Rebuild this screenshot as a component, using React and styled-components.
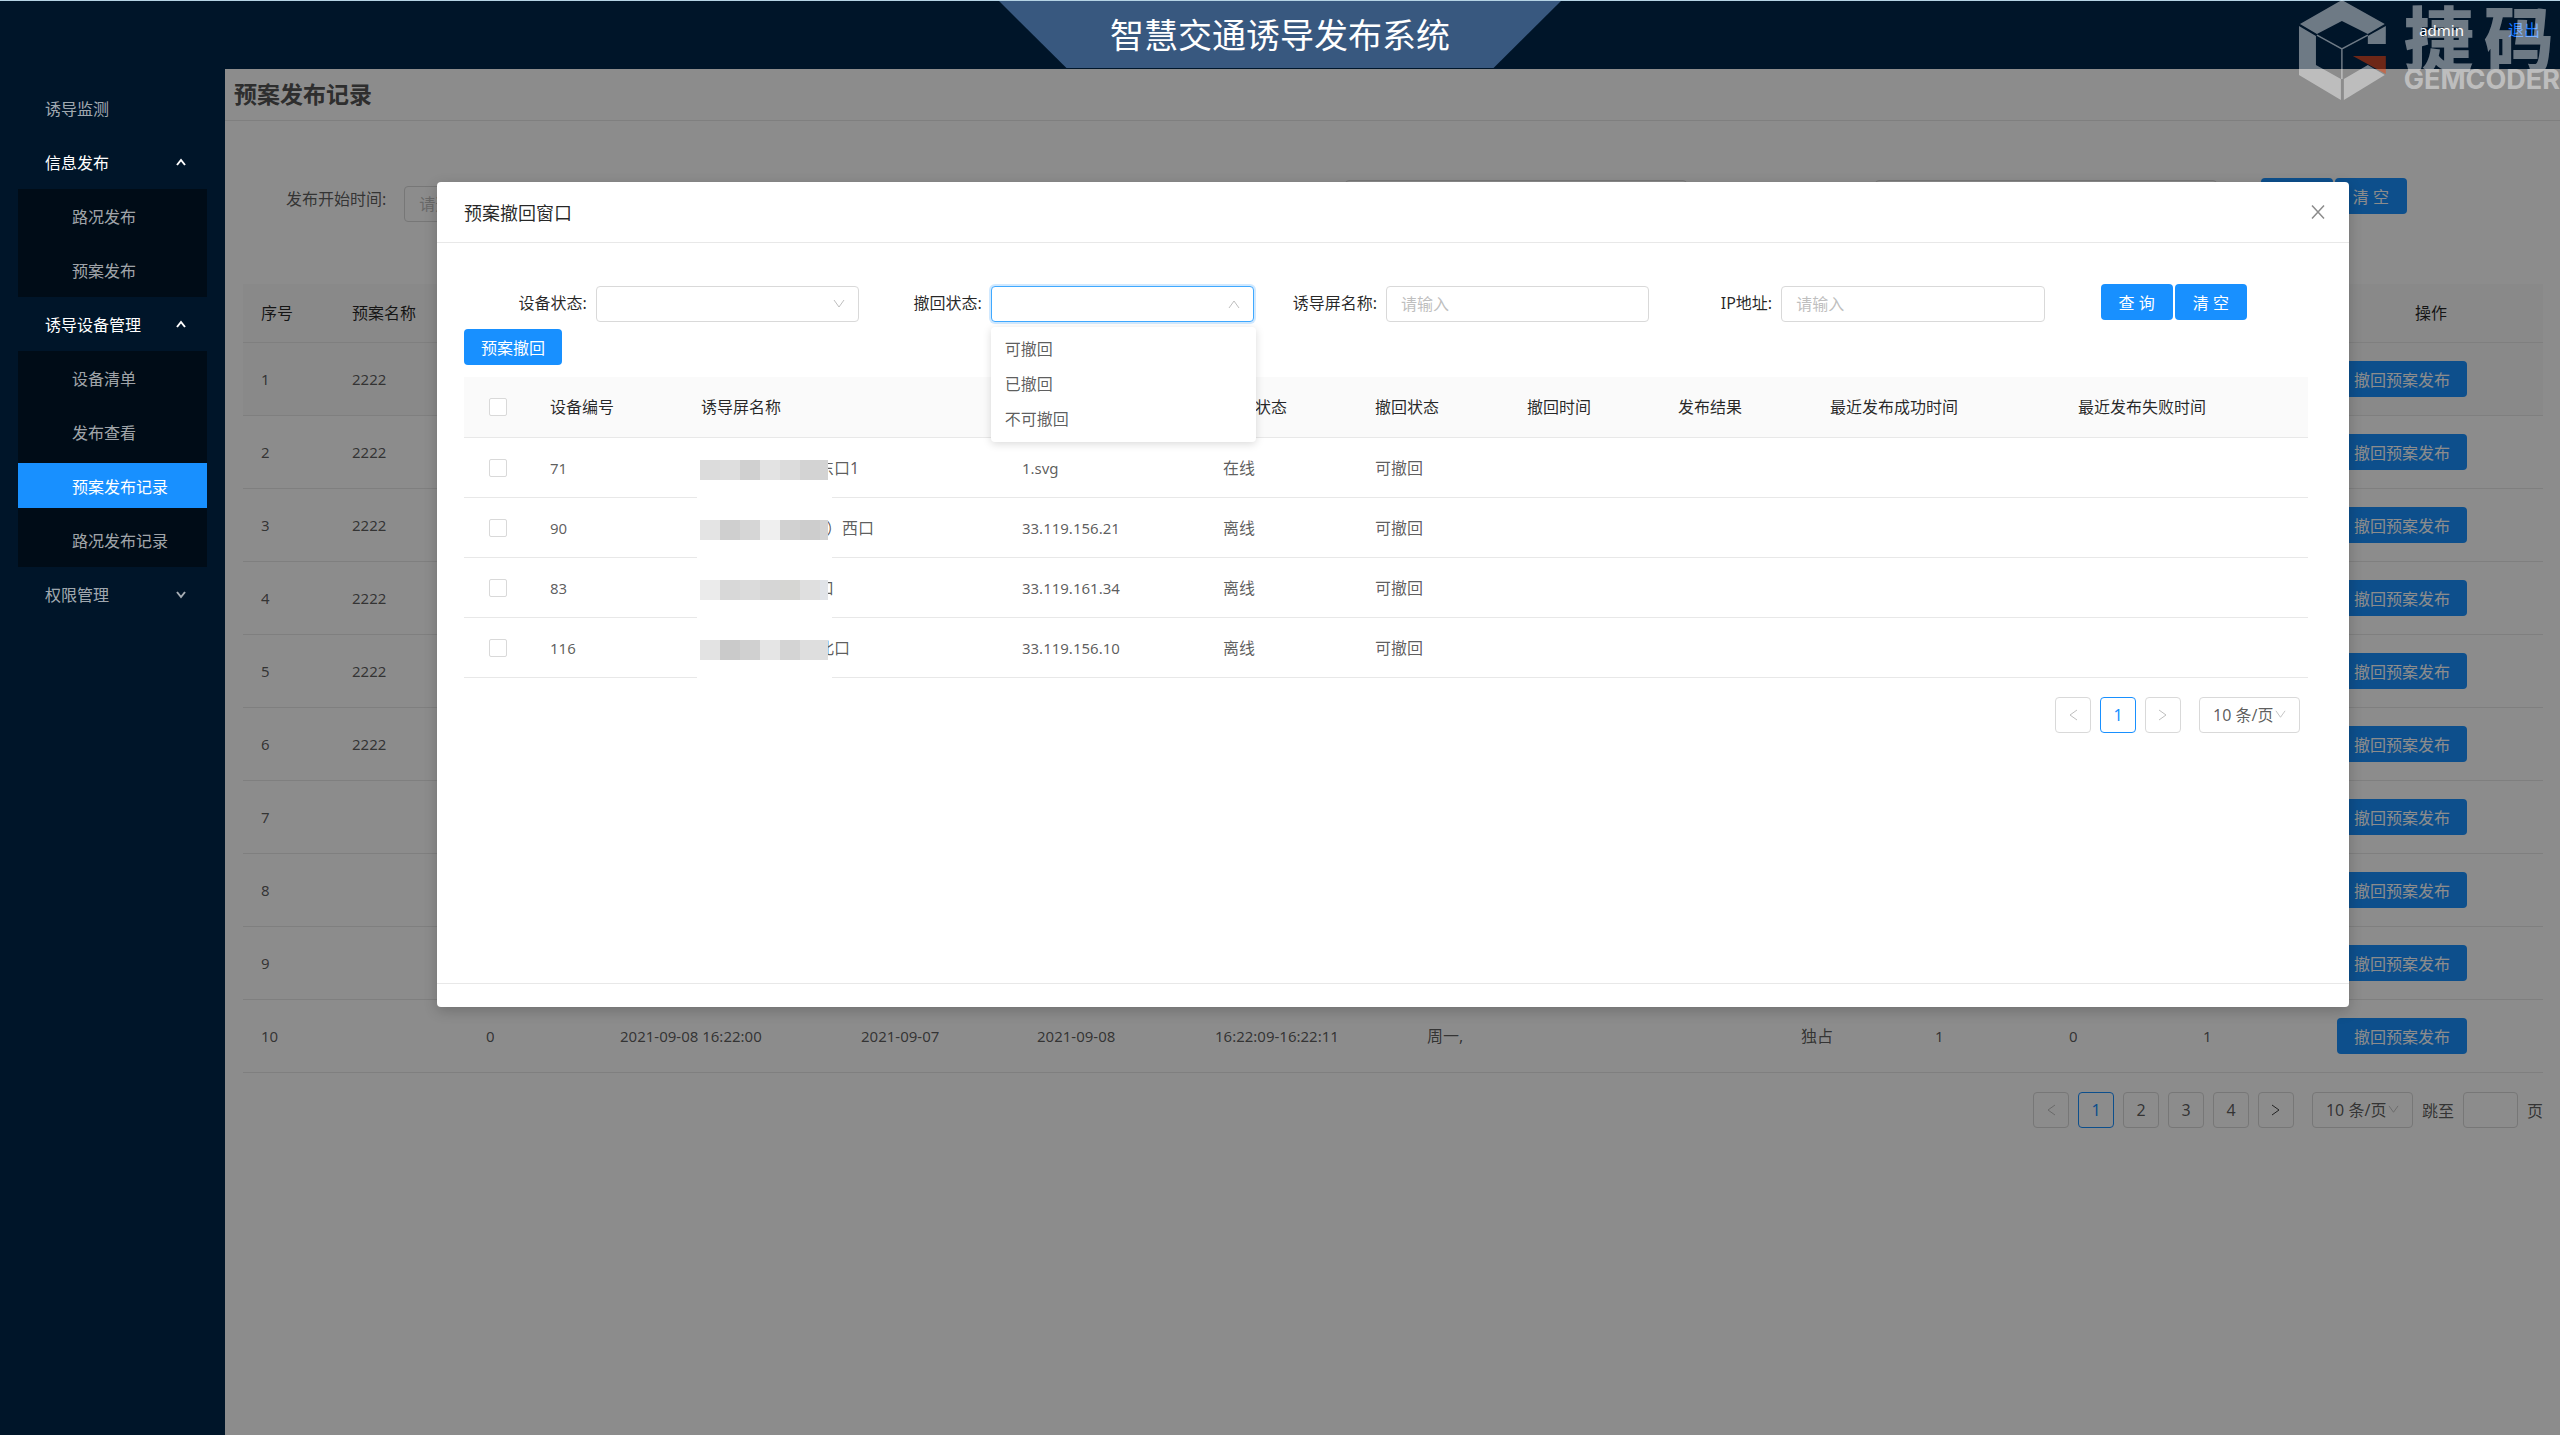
import styled, { createGlobalStyle, css } from "styled-components";

const GlobalStyle = createGlobalStyle`
	* {
		box-sizing: border-box;
	}
	body {
		margin: 0;
		background-color: #001529;
	}
	body, button, input, select {
		font-family: "Noto Sans", "Noto Sans CJK SC", sans-serif;
		font-size: 16px;
		color: rgba(0, 0, 0, 0.65);
	}
`;

const Page = styled.div`
	display: grid;
	grid-template: 69px 1fr / 225px 1fr;
	min-height: 100vh;
`;

/* header */

const Header = styled.header`
	grid-column: 1 / 3;
	position: relative;
	display: flex;
	justify-content: center;
	background-color: #001529;
	border-top: 1px solid #b5d3e4;
`;

const Banner = styled.h1`
	width: 562px;
	height: 67px;
	margin: 0;
	background-color: #38587f;
	clip-path: polygon(0 0, 100% 0, 88% 100%, 12% 100%);
	color: white;
	font-size: 34px;
	font-weight: 400;
	line-height: 68px;
	text-align: center;
`;

const Account = styled.div`
	position: absolute;
	top: 0;
	right: 20px;
	display: flex;
	gap: 44px;
	line-height: 58px;
	color: white;
	font-size: 15px;
`;

const Logout = styled.a`
	color: #1677ff;
	font-size: 16px;
	text-decoration: none;
`;

const Watermark = styled.div`
	position: absolute;
	top: 0;
	right: 0;
	z-index: 5;
	width: 270px;
	height: 104px;
	display: flex;
	gap: 6px;
	overflow: hidden;
	opacity: 0.43;
	color: white;
	pointer-events: none;
`;

const Brand = styled.div`
	display: flex;
	flex-direction: column;
	padding-top: 5px;
	white-space: nowrap;
`;

const BrandName = styled.div`
	display: flex;
	gap: 10px;
	font-family: "Noto Sans CJK SC", sans-serif;
	font-size: 70px;
	font-weight: 900;
	line-height: 62px;
`;

const BrandLatin = styled.div`
	font-family: Inter, sans-serif;
	font-size: 27px;
	font-weight: 700;
	line-height: 26px;
`;

/* side menu */

const Side = styled.nav`
	padding: 12px 18px;
	background-color: #001529;
`;

const itemText = css`
	display: flex;
	align-items: center;
	justify-content: space-between;
	width: 100%;
	border: none;
	font-size: 16px;
	text-align: left;
	text-decoration: none;
	color: ${(props) => (props.$active ? "white" : "rgba(255, 255, 255, 0.65)")};
`;

const MenuTitle = styled.button`
	${itemText}
	height: 54px;
	padding: 0 20px 0 27px;
	background: none;
`;

const SubMenu = styled.div`
	display: flex;
	flex-direction: column;
	gap: 9px;
	padding: 4px 0 5px;
	background-color: #000c17;
`;

const SubItem = styled.a`
	${itemText}
	height: 45px;
	padding-left: 54px;
	background-color: ${(props) => (props.$active ? "#1890ff" : "transparent")};
`;

/* shared controls */

const Button = styled.button`
	height: 36px;
	padding: 0 ${(props) => (props.$short ? 18 : 17)}px;
	border: none;
	border-radius: 4px;
	background-color: #1890ff;
	color: white;
	white-space: nowrap;
`;

const TextInput = styled.input`
	width: 100%;
	height: 36px;
	padding: 0 14px;
	border: 1px solid #d9d9d9;
	border-radius: 4px;
	background-color: white;
	&::placeholder {
		color: #bfbfbf;
	}
`;

const SelectBox = styled.div`
	position: relative;
	width: ${(props) => props.$width || "100%"};
	margin-left: ${(props) => (props.$width ? "9px" : 0)};
	& > svg {
		position: absolute;
		top: 12px;
		right: 14px;
		pointer-events: none;
	}
`;

const Select = styled.select`
	appearance: none;
	display: block;
	width: 100%;
	height: 36px;
	padding: 0 13px;
	border: 1px solid ${(props) => (props.$open ? "#40a9ff" : "#d9d9d9")};
	border-radius: 4px;
	background-color: white;
	font-size: 16px;
	box-shadow: ${(props) =>
		props.$open ? "0 0 0 2px rgba(24, 144, 255, 0.2)" : "none"};
`;

const Menu = styled.ul`
	position: absolute;
	top: 41px;
	left: 0;
	z-index: 2;
	width: 265px;
	margin: 0;
	padding: 5px 0;
	border-radius: 4px;
	background-color: white;
	box-shadow: 0 2px 9px rgba(0, 0, 0, 0.15);
	list-style: none;
`;

const MenuOption = styled.li`
	padding: 0 14px;
	line-height: 35px;
`;

const Table = styled.table`
	width: 100%;
	table-layout: fixed;
	border-spacing: 0;
	line-height: 24px;
`;

const Th = styled.th`
	height: ${(props) => props.$height}px;
	padding: 0 0 0 18px;
	border-bottom: 1px solid #e8e8e8;
	background-color: #fafafa;
	color: rgba(0, 0, 0, 0.85);
	font-weight: 400;
	text-align: left;
	&:last-child {
		${(props) => props.$center && "text-align: center; padding: 0;"}
	}
`;

const Td = styled.td`
	height: ${(props) => props.$height}px;
	padding: 0 0 0 18px;
	border-bottom: 1px solid #e8e8e8;
	background-color: ${(props) => (props.$hover ? "#fafafa" : "transparent")};
	font-size: ${(props) => (props.$latin ? 15 : 16)}px;
	white-space: nowrap;
`;

const Pager = styled.div`
	display: flex;
	align-items: center;
	justify-content: flex-end;
	gap: 9px;
	padding: 19px ${(props) => props.$right || 0}px 0 0;
`;

const PageButton = styled.button`
	display: flex;
	align-items: center;
	justify-content: center;
	width: 36px;
	height: 36px;
	padding: 0;
	border: 1px solid ${(props) => (props.$current ? "#1890ff" : "#d9d9d9")};
	border-radius: 4px;
	background-color: white;
	font-size: 16px;
	color: ${(props) =>
		props.$current ? "#1890ff" : props.disabled ? "#bfbfbf" : "rgba(0, 0, 0, 0.65)"};
`;

const Jump = styled.label`
	display: flex;
	align-items: center;
	gap: 9px;
`;

const JumpInput = styled(TextInput)`
	width: 55px;
`;

/* record page */

const Main = styled.main`
	position: relative;
	background-color: white;
`;

const PageTitle = styled.h2`
	margin: 0;
	padding: 0 9px;
	border-bottom: 1px solid #e8e8e8;
	color: #555;
	font-size: 23px;
	font-weight: 700;
	line-height: 51px;
`;

const Records = styled.section`
	padding: 57px 17px 0 18px;
`;

const Search = styled.form`
	display: flex;
	gap: 44px;
	height: 106px;
	padding: 0 136px 0 43px;
`;

const SearchFields = styled.div`
	flex: 1;
	display: grid;
	grid-template-columns: repeat(4, 1fr);
	gap: 188px;
`;

const SearchField = styled.div`
	display: flex;
	gap: 18px;
	padding-top: ${(props) => props.$top}px;
	white-space: nowrap;
	line-height: 27px;
	& > label {
		flex: none;
	}
`;

const ButtonPair = styled.div`
	display: flex;
	gap: 2px;
`;

const Mask = styled.div`
	position: absolute;
	inset: 0;
	padding: 113px 211px 0 212px;
	background-color: rgba(0, 0, 0, 0.45);
`;

/* recall window */

const Modal = styled.section`
	border-radius: 4px;
	background-color: white;
	box-shadow: 0 4px 14px rgba(0, 0, 0, 0.2);
`;

const ModalHeader = styled.div`
	display: flex;
	align-items: center;
	justify-content: space-between;
	height: 61px;
	padding: 0 24px 0 27px;
	border-bottom: 1px solid #e8e8e8;
`;

const ModalTitle = styled.h3`
	margin: 0;
	color: rgba(0, 0, 0, 0.85);
	font-size: 18px;
	font-weight: 400;
`;

const CloseButton = styled.button`
	display: flex;
	padding: 0;
	border: none;
	background: none;
`;

const ModalBody = styled.div`
	min-height: 740px;
	padding: 41px 41px 0 27px;
`;

const ModalFooter = styled.div`
	height: 24px;
	border-top: 1px solid #e8e8e8;
`;

const FilterForm = styled.form`
	display: grid;
	grid-template-columns: 3fr 3fr 3fr 3fr 2fr;
	margin-bottom: 7px;
`;

const Field = styled.div`
	display: grid;
	grid-template-columns: 1fr 2fr;
	padding-top: 2px;
`;

const FieldLabel = styled.label`
	padding-right: 9px;
	color: rgba(0, 0, 0, 0.85);
	line-height: 35px;
	text-align: right;
`;

const FilterButtons = styled(ButtonPair)`
	padding-left: 56px;
`;

const TableWrap = styled.div`
	margin-top: 12px;
`;

const Check = styled.input`
	appearance: none;
	display: block;
	width: 18px;
	height: 18px;
	margin: 0 0 0 7px;
	border: 1px solid #d9d9d9;
	border-radius: 2px;
	background-color: white;
`;

const ScreenName = styled.div`
	position: relative;
	display: flex;
`;

const Mosaic = styled.span`
	position: relative;
	z-index: 1;
	flex: none;
	display: flex;
	width: 128px;
	height: 20px;
	margin: 4px -10px 0 -1px;
	&::after {
		content: "";
		position: absolute;
		top: 20px;
		left: -3px;
		width: 135px;
		height: 22px;
		background-color: white;
	}
`;

const Block = styled.span`
	flex: 0 1 ${(props) => (props.$last ? 8 : 20)}px;
	background-color: ${(props) => props.$color};
`;

function Chevron({ d, size = 12, color = "#bfbfbf", weight = 1 }) {
	return (
		<svg width={size} height={size} viewBox="0 0 12 12" fill="none" stroke={color} strokeWidth={weight}>
			<path d={d} />
		</svg>
	);
}

const UP = "M1 10 L6 3 L11 10";
const DOWN = "M1 2 L6 9 L11 2";
const LEFT = "M10 1 L3 6 L10 11";
const RIGHT = "M2 1 L9 6 L2 11";

const menu = [
	{ title: "诱导监测" },
	{ title: "信息发布", open: true, items: ["路况发布", "预案发布"] },
	{
		title: "诱导设备管理",
		open: true,
		items: ["设备清单", "发布查看", "预案发布记录", "路况发布记录"],
	},
	{ title: "权限管理", items: [] },
];

const recordCols = [91, 134, 134, 241, 176, 178, 212, 374, 134, 134, 134, 134, 224];
const recordHeads = ["序号", "预案名称", "", "", "", "", "", "", "", "", "", "", "操作"];
const lastRecord = ["", "0", "2021-09-08 16:22:00", "2021-09-07", "2021-09-08", "16:22:09-16:22:11", "周一,", "独占", "1", "0", "1"];
const blankRecord = Array(10).fill("");
const records = Array.from({ length: 10 }, (_, i) => {
	if (i === 9) return ["10", ...lastRecord];
	return [String(i + 1), i < 6 ? "2222" : "", ...blankRecord];
});

const deviceCols = [68, 151, 321, 201, 152, 152, 151, 152, 248, 248];
const deviceHeads = ["设备编号", "诱导屏名称", "IP地址", "设备状态", "撤回状态", "撤回时间", "发布结果", "最近发布成功时间", "最近发布失败时间"];
const devices = [
	{ id: "71", tail: "东口1", ip: "1.svg", status: "在线", blocks: ["#dcdcdc", "#dedede", "#d0d0d0", "#e3e3e3", "#dcdcdc", "#d3d3d3", "#d3d3d3"] },
	{ id: "90", tail: "\u2002）西口", ip: "33.119.156.21", status: "离线", blocks: ["#e4e4e4", "#cfcfcf", "#d6d6d6", "#efefef", "#d1d1d1", "#cdcdcd", "#d3d3d3"] },
	{ id: "83", tail: "口", ip: "33.119.161.34", status: "离线", blocks: ["#ebebeb", "#d8d8d8", "#dbdbdb", "#d6d6d6", "#d6d6d3", "#dfdfdf", "#e0e3e8"] },
	{ id: "116", tail: "北口", ip: "33.119.156.10", status: "离线", blocks: ["#e3e3e3", "#cacaca", "#d0d0d0", "#e5e5e5", "#d4d4d4", "#dedede", "#dedede"] },
];

const isLatin = (text) => /^[\x20-\x7e]*$/.test(text);

function Cols({ widths }) {
	const total = widths.reduce((sum, width) => sum + width, 0);
	return (
		<colgroup>
			{widths.map((width, i) => (
				<col key={i} style={{ width: `${(width / total) * 100}%` }} />
			))}
		</colgroup>
	);
}

function PageSize() {
	return (
		<SelectBox $width="101px">
			<Select aria-label="每页条数">
				<option>10 条/页</option>
			</Select>
			<Chevron d={DOWN} size={11} />
		</SelectBox>
	);
}

function SideMenu() {
	return (
		<Side>
			{menu.map(({ title, open, items }) => (
				<div key={title}>
					<MenuTitle $active={open}>
						{title}
						{items && (
							<Chevron
								d={open ? "M2 9 L6 4 L10 9" : "M2 4 L6 9 L10 4"}
								color={open ? "white" : "#a6adb4"}
								weight={2}
							/>
						)}
					</MenuTitle>
					{open && (
						<SubMenu>
							{items.map((item) => (
								<SubItem key={item} href="#" $active={item === "预案发布记录"}>
									{item}
								</SubItem>
							))}
						</SubMenu>
					)}
				</div>
			))}
		</Side>
	);
}

function RecordPage() {
	return (
		<>
			<PageTitle>预案发布记录</PageTitle>
			<Records>
				<Search>
					<SearchFields>
						<SearchField $top={8}>
							<label htmlFor="start">发布开始时间:</label>
							<TextInput id="start" placeholder="请选择" />
						</SearchField>
						<SearchField $top={8}>
							<TextInput aria-label="发布结束时间" />
						</SearchField>
						<SearchField $top={2}>
							<TextInput aria-label="预案名称" />
						</SearchField>
						<SearchField $top={2}>
							<TextInput aria-label="发布方式" />
						</SearchField>
					</SearchFields>
					<ButtonPair>
						<Button type="button" $short>查 询</Button>
						<Button type="button" $short>清 空</Button>
					</ButtonPair>
				</Search>
				<Table>
					<Cols widths={recordCols} />
					<thead>
						<tr>
							{recordHeads.map((head, i) => (
								<Th key={i} $height={59} $center>{head}</Th>
							))}
						</tr>
					</thead>
					<tbody>
						{records.map((cells, row) => (
							<tr key={row}>
								{cells.map((cell, i) => (
									<Td key={i} $height={73} $hover={row === 0} $latin={isLatin(cell)}>{cell}</Td>
								))}
								<Td $height={73} $hover={row === 0}>
									<Button>撤回预案发布</Button>
								</Td>
							</tr>
						))}
					</tbody>
				</Table>
				<Pager>
					<PageButton disabled aria-label="上一页"><Chevron d={LEFT} /></PageButton>
					<PageButton $current>1</PageButton>
					<PageButton>2</PageButton>
					<PageButton>3</PageButton>
					<PageButton>4</PageButton>
					<PageButton aria-label="下一页"><Chevron d={RIGHT} color="#404040" /></PageButton>
					<PageSize />
					<Jump>
						跳至
						<JumpInput />
						页
					</Jump>
				</Pager>
			</Records>
		</>
	);
}

function RecallModal() {
	return (
		<Modal role="dialog" aria-labelledby="recall-title">
			<ModalHeader>
				<ModalTitle id="recall-title">预案撤回窗口</ModalTitle>
				<CloseButton aria-label="关闭">
					<svg width="14" height="14" viewBox="0 0 14 14" stroke="#8c8c8c" strokeWidth="1.5">
						<path d="M1 0.5 L13 13.5 M13 0.5 L1 13.5" />
					</svg>
				</CloseButton>
			</ModalHeader>
			<ModalBody>
				<FilterForm>
					<Field>
						<FieldLabel htmlFor="device">设备状态:</FieldLabel>
						<SelectBox>
							<Select id="device" />
							<Chevron d={DOWN} />
						</SelectBox>
					</Field>
					<Field>
						<FieldLabel htmlFor="recall">撤回状态:</FieldLabel>
						<SelectBox>
							<Select id="recall" $open />
							<Chevron d={UP} />
							<Menu role="listbox">
								<MenuOption role="option">可撤回</MenuOption>
								<MenuOption role="option">已撤回</MenuOption>
								<MenuOption role="option">不可撤回</MenuOption>
							</Menu>
						</SelectBox>
					</Field>
					<Field>
						<FieldLabel htmlFor="screen">诱导屏名称:</FieldLabel>
						<TextInput id="screen" placeholder="请输入" />
					</Field>
					<Field>
						<FieldLabel htmlFor="ip">IP地址:</FieldLabel>
						<TextInput id="ip" placeholder="请输入" />
					</Field>
					<FilterButtons>
						<Button type="button" $short>查 询</Button>
						<Button type="button" $short>清 空</Button>
					</FilterButtons>
				</FilterForm>
				<Button>预案撤回</Button>
				<TableWrap>
					<Table>
						<Cols widths={deviceCols} />
						<thead>
							<tr>
								<Th $height={61}><Check type="checkbox" aria-label="全选" /></Th>
								{deviceHeads.map((head) => (
									<Th key={head} $height={61}>{head}</Th>
								))}
							</tr>
						</thead>
						<tbody>
							{devices.map(({ id, tail, ip, status, blocks }) => (
								<tr key={id}>
									<Td $height={60}><Check type="checkbox" aria-label={id} /></Td>
									<Td $height={60} $latin>{id}</Td>
									<Td $height={60}>
										<ScreenName>
											<Mosaic>
												{blocks.map((color, i) => (
													<Block key={i} $color={color} $last={i === 6} />
												))}
											</Mosaic>
											{tail}
										</ScreenName>
									</Td>
									<Td $height={60} $latin>{ip}</Td>
									<Td $height={60}>{status}</Td>
									<Td $height={60}>可撤回</Td>
									<Td $height={60} />
									<Td $height={60} />
									<Td $height={60} />
									<Td $height={60} />
								</tr>
							))}
						</tbody>
					</Table>
				</TableWrap>
				<Pager $right={8}>
					<PageButton disabled aria-label="上一页"><Chevron d={LEFT} /></PageButton>
					<PageButton $current>1</PageButton>
					<PageButton disabled aria-label="下一页"><Chevron d={RIGHT} /></PageButton>
					<PageSize />
				</Pager>
			</ModalBody>
			<ModalFooter />
		</Modal>
	);
}

function Logo() {
	return (
		<Watermark>
			<svg width="108" height="104" viewBox="0 0 108 104" fill="white">
				<path d="M52 0 L95 24 L78 34 L52 21 L27 34 L10 24 Z" />
				<path d="M96 26 V44 H78 V36 Z" />
				<path d="M9 26 L26 36 V65 L51 79 V100 L9 75 Z" />
				<path d="M54 79 L78 65 L95 75 L54 100 Z" />
				<path d="M63 56 H96 V74 Z" fill="#ff4000" />
				<path d="M27 35 L52 49 L78 35 M52 49 V79" fill="none" stroke="white" strokeWidth="1.5" />
			</svg>
			<Brand>
				<BrandName>
					<span>捷</span>
					<span>码</span>
				</BrandName>
				<BrandLatin>GEMCODER</BrandLatin>
			</Brand>
		</Watermark>
	);
}

function App() {
	return (
		<>
			<GlobalStyle />
			<Page>
				<Header>
					<Banner>智慧交通诱导发布系统</Banner>
					<Account>
						<span>admin</span>
						<Logout href="#">退出</Logout>
					</Account>
				</Header>
				<SideMenu />
				<Main>
					<RecordPage />
					<Mask>
						<RecallModal />
					</Mask>
				</Main>
			</Page>
			<Logo />
		</>
	);
}

export default App;
